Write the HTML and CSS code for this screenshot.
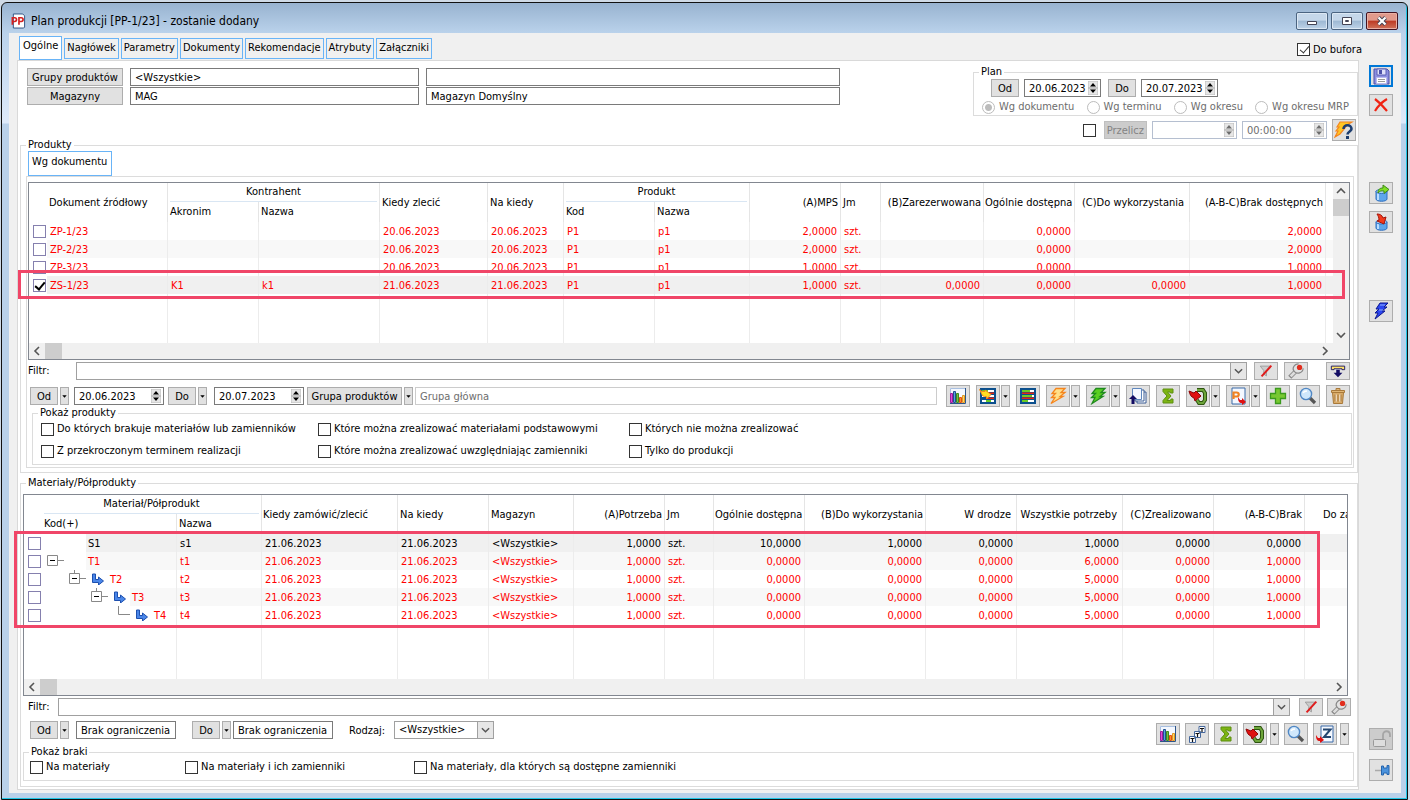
FILE: index.html
```html
<!DOCTYPE html>
<html lang="pl">
<head>
<meta charset="utf-8">
<title>Plan produkcji [PP-1/23]</title>
<link rel="stylesheet" href="styles.css">
</head>
<body>
<svg class="sprite" aria-hidden="true">
  <symbol id="i-save" viewBox="0 0 20 18"><path d="M3 2h13l2 2v13H3z" fill="#8d8fe0" stroke="#4c51a8"/><path d="M6 2h9v6H6z" fill="#dfe0fb" stroke="#5b60b5"/><path d="M8 3h3v4H8z" fill="#4c51a8"/><path d="M5.500 10.500h10v6h-10z" fill="#fff" stroke="#b9bbee"/><path d="M7 12.500h7M7 14.500h7" stroke="#999"/></symbol>
  <symbol id="i-x" viewBox="0 0 20 18"><path d="M4 3c4 3 8 7 12 12M16 3C11 6 7 10 4 15" fill="none" stroke="#f02313" stroke-width="2.200"/></symbol>
  <symbol id="i-dbup" viewBox="0 0 20 18"><path d="M5 7v8c0 3 11 3 11 0V7z" fill="#5ea6ea" stroke="#2f6fc0"/><path d="M7 9v7" stroke="#b9dcff" stroke-width="2"/><ellipse cx="10.500" cy="7.500" rx="5.500" ry="2" fill="#a9d2f8" stroke="#2f6fc0"/><path d="M7 9c0-4 2-5 5-5V1l6 4.500-5 4V7c-3-.5-4 0-6 2z" fill="#7fdd26" stroke="#3c8a14"/></symbol>
  <symbol id="i-dbdown" viewBox="0 0 20 18"><path d="M5 9v6c0 3 11 3 11 0V9z" fill="#5ea6ea" stroke="#2f6fc0"/><path d="M7 11v5" stroke="#b9dcff" stroke-width="2"/><ellipse cx="10.500" cy="9" rx="5.500" ry="2" fill="#a9d2f8" stroke="#2f6fc0"/><path d="M6 1c3 0 5 1 6 4l3-1-2 7-7-3 2-1c0-3-1-4-2-6z" fill="#f23a1c" stroke="#a51408"/></symbol>
  <symbol id="i-boltblue" viewBox="0 0 20 18"><path d="M9 1h8l-4 4h3l-5 4h3L4 17l3-6H4l4-4H5z" fill="#2b46f0" stroke="#0b168f"/><path d="M9 3h5M8 8h4" stroke="#8fb0ff"/></symbol>
  <symbol id="i-boltorange" viewBox="0 0 20 18"><path d="M8 1.500h9l-4 4h4l-5 4h3L3 16.500l4-6H3.500l4-4H4z" fill="#ffe08a" stroke="#f5851d" stroke-width="1.300"/></symbol>
  <symbol id="i-boltgreen" viewBox="0 0 20 18"><path d="M8 1.500h9l-4 4h4l-5 4h3L4 16.500l3-6H3.500l4-4H4z" fill="#5ad022" stroke="#1f8a1d" stroke-width="1.300"/></symbol>
  <symbol id="i-boltq" viewBox="0 0 20 18"><path d="M6 1h12l-5 3-2 3-5 6-5 3 3-6H2l3-4H3z" fill="#ffc524" stroke="#f5851d" stroke-width="1.200"/><path d="M9.500 8c0-5 8-5 8 0 0 2.500-4 2.500-4 5.500" fill="none" stroke="#1d3d6e" stroke-width="2.600"/><path d="M12 15h3v3h-3z" fill="#1d3d6e"/></symbol>
  <symbol id="i-lock" viewBox="0 0 20 18"><path d="M12 10V5c0-5 7-5 7 0v2" fill="none" stroke="#a6a6a6" stroke-width="1.800"/><rect x="2.500" y="9.500" width="12" height="7" rx="1" fill="#ddd" stroke="#999"/></symbol>
  <symbol id="i-pin" viewBox="0 0 20 18"><path d="M4 9.500h8" stroke="#aaa" stroke-width="1.500"/><path d="M10.500 5h2v2h3.500V4.500h2v9h-2V12h-3.500v2h-2z" fill="#4b93dd" stroke="#2465ae"/></symbol>
  <symbol id="i-chart" viewBox="0 0 20 18"><path d="M2 1h16v16H2z" fill="#f4f8ff"/><path d="M2.500 17V1.500H18" fill="none" stroke="#a8bfe0"/><path d="M17.500 1v15.500H2" fill="none" stroke="#2d5488"/><path d="M2.500 6.500h2v9h-2z" fill="#e04bd8" stroke="#9a1f9a"/><path d="M5.500 4.500h2v11h-2z" fill="#5aa2de" stroke="#1f4f91"/><path d="M8.500 6.500h2v9h-2z" fill="#76c043" stroke="#3e8a1f"/><path d="M11.500 10.500h2v5h-2z" fill="#ff8a2b" stroke="#e04f10"/><path d="M14.500 8.500h2v7h-2z" fill="#ffd36a" stroke="#e09a20"/></symbol>
  <symbol id="i-list" viewBox="0 0 20 18"><path d="M2 1h16v16H2z" fill="#0b4f8d"/><path d="M4 3h12v2H4zM4 8h12v2H4zM4 13h12v2H4z" fill="#fff"/><path d="M4 3h8v2H4zM4 8h10v2H4zM4 13h6v2H4z" fill="#6acb25"/><path d="M4 5.500h12V7H4zM4 10.500h12V12H4z" fill="#e22714"/></symbol>
  <symbol id="i-listarrow" viewBox="0 0 20 18"><path d="M2 1h16v16H2z" fill="#0b4f8d"/><path d="M4 3h12v2H4zM4 8h12v2H4zM4 13h12v2H4z" fill="#fff"/><path d="M4 3h6v2H4zM8 13h5v2H8z" fill="#6acb25"/><path d="M9 5.500h7V7H9zM9 10.500h7V12H9z" fill="#e22714"/><path d="M1.500 2.500L4 4.500h3V3l6 4.500-4.500 4.500v-2.500C5.500 10 3.500 8 4 7.500z" fill="#ffdf21" stroke="#f28a1c"/></symbol>
  <symbol id="i-pages" viewBox="0 0 20 18"><path d="M9 5h9v11H9z" fill="#fff" stroke="#3b5d95"/><path d="M7 3h9v11H7z" fill="#fff" stroke="#3b5d95"/><path d="M4.500 1.500h9v11h-9z" fill="#f4f8ff" stroke="#5e86bd"/><path d="M1 12l4-4 4 4H6.500v5h-3v-5z" fill="#120c63"/></symbol>
  <symbol id="i-sigma" viewBox="0 0 20 18"><path d="M5 2h10v4h-2.500L12 5H9.500L13 9l-4 4.500h3.500l.5-1.500H15v4H5v-2.500L9 9 5 4.500z" fill="#7db414" stroke="#5c8f10"/></symbol>
  <symbol id="i-loop" viewBox="0 0 20 18"><path d="M9 3h6l2 3v7l-2 3h-4l-2-3" fill="none" stroke="#2e5410" stroke-width="4"/><path d="M9 3h6l2 3v7l-2 3h-4l-2-3" fill="none" stroke="#6da53a" stroke-width="2"/><path d="M1 4l5 2 2-2 5 5-6 5-1-3C3 10 2 8 1 4z" fill="#df1111" stroke="#8e0606"/></symbol>
  <symbol id="i-p" viewBox="0 0 20 18"><path d="M4 1h13v16H4z" fill="#f4f8ff" stroke="#3b6ba8"/><path d="M5.500 12V5.500h3c3 0 3 4 0 4h-3" fill="none" stroke="#f08222" stroke-width="2.200"/><path d="M10 10l2 3 2 0v-2l4 4-4 3v-2c-3 0-4-2-4-6z" fill="#df1111"/></symbol>
  <symbol id="i-z" viewBox="0 0 20 18"><path d="M6 1h12v16H6z" fill="#f4f8ff" stroke="#3b6ba8"/><path d="M8 4.500h7.500L9 12h7" fill="none" stroke="#24466f" stroke-width="2"/><path d="M1 10l2 3h2v-2l4 4-4 3v-2c-3 0-4-2-4-6z" fill="#df1111"/></symbol>
  <symbol id="i-plus" viewBox="0 0 20 18"><path d="M7.500 1.500h5v5h5v5h-5v5h-5v-5h-5v-5h5z" fill="#78c832" stroke="#3b9a1d" stroke-width="1.300"/></symbol>
  <symbol id="i-zoom" viewBox="0 0 20 18"><path d="M12 11l5 5" stroke="#555" stroke-width="3.200"/><circle cx="8" cy="7" r="5.600" fill="#cfe7fb" stroke="#5087c4" stroke-width="1.400"/><path d="M5 6c1-2 2-2 4-2" fill="none" stroke="#fff" stroke-width="1.500"/></symbol>
  <symbol id="i-trash" viewBox="0 0 20 18"><path d="M4.500 5.500h11l-1 11h-9z" fill="#d9ab68" stroke="#a9793a"/><path d="M3.500 3.500h13v2h-13zM8 3V1.500h4V3" fill="#e0b675" stroke="#a9793a"/><path d="M8 7.500v7M12 7.500v7" stroke="#fff"/><path d="M7 7.500v7M13 7.500v7M10 7.500v7" stroke="#a9793a"/></symbol>
  <symbol id="i-nofilter" viewBox="0 0 20 18"><path d="M3.500 3.500h11l-4 5v6l-3-2v-4z" fill="#ccc" stroke="#999"/><path d="M5 15L16 3" stroke="#e01c1c" stroke-width="2.200"/></symbol>
  <symbol id="i-wrench" viewBox="0 0 20 18"><path d="M3 16l7-7" stroke="#888" stroke-width="5"/><path d="M4 15l6-6" stroke="#ddd" stroke-width="3"/><path d="M13 1C8 1 5 6 8 9.500s10 2 10-3.500" fill="#e2e2e2" stroke="#888" stroke-width="1.300"/><circle cx="14" cy="5" r="3" fill="#e12f1f"/></symbol>
  <symbol id="i-expand" viewBox="0 0 20 18"><path d="M2.500 3.500h15v4h-3v-1h-9v1h-3z" fill="#ffe36a" stroke="#120c63"/><path d="M8 7.500h4V11h3l-5 5-5-5h3z" fill="#120c63"/></symbol>
  <symbol id="i-steps" viewBox="0 0 20 18"><path d="M12 1.500h6v6h-6zM7.500 6.500h6v6h-6zM2.500 11.500h6v6h-6z" fill="#fff" stroke="#44679c"/><path d="M13 3.500h4M15 3v4M8.500 8.500h4M10.500 8v4M3.500 13.500h4M5.500 13v4" stroke="#111" stroke-width="1.200"/></symbol>
  <symbol id="i-sub" viewBox="0 0 13 12"><path d="M1.500 1h3v5.500h3V4l5 4-5 4V9.500h-6z" fill="#4a86e8" stroke="#1d4fae"/></symbol>
  <symbol id="i-chev" viewBox="0 0 10 10"><path d="M1 3l4 4 4-4" fill="none" stroke="#555" stroke-width="1.600"/></symbol>
  <symbol id="i-caret" viewBox="0 0 8 8"><path d="M1.500 3h5L4 6z" fill="#000"/></symbol>
  <symbol id="i-spin" viewBox="0 0 10 14"><path d="M0 0h10v7H0zM0 7h10v7H0z" fill="#e6e6e6" stroke="#bbb"/><path d="M2 5.500h6L5 2zM2 8.500h6L5 12z" fill="currentColor"/></symbol>
</svg>

<div class="window">
  <header class="titlebar">
    <svg class="app-icon" viewBox="0 0 16 16"><path d="M2.500.5h10l2 2v12l-1 1h-11z" fill="#fff" stroke="#2c4f80"/><path d="M1.500 12V4.500H4c2.500 0 2.500 4 0 4H2M8.500 12V4.500H11c2.500 0 2.500 4 0 4H9" fill="none" stroke="#d42222" stroke-width="1.800"/></svg>
    <h1 class="title">Plan produkcji [PP-1/23] - zostanie dodany</h1>
    <button class="win-btn" aria-label="Minimalizuj"><svg viewBox="0 0 30 16"><path d="M10.500 8.500h9v3h-9z" fill="#fff" stroke="#445"/></svg></button>
    <button class="win-btn" aria-label="Maksymalizuj"><svg viewBox="0 0 30 16"><path d="M10.500 4.500h9v7h-9zM13.500 7.500h3v1h-3z" fill="#fff" stroke="#445"/></svg></button>
    <button class="win-btn win-close" aria-label="Zamknij"><svg viewBox="0 0 30 16"><path d="M11.500 4.500l7 7M18.500 4.500l-7 7" stroke="#445" stroke-width="4"/><path d="M11.500 4.500l7 7M18.500 4.500l-7 7" stroke="#fff" stroke-width="2.200"/></svg></button>
  </header>

  <div class="client">
    <nav class="tabs">
      <button class="tab tab-active">Ogólne</button>
      <button class="tab">Nagłówek</button>
      <button class="tab">Parametry</button>
      <button class="tab">Dokumenty</button>
      <button class="tab">Rekomendacje</button>
      <button class="tab">Atrybuty</button>
      <button class="tab">Załączniki</button>
      <label class="check buffer"><input type="checkbox" checked>Do bufora</label>
    </nav>

    <div class="body">
      <main class="panel">
        <div class="top">
          <div class="sources">
            <button class="btn">Grupy produktów</button>
            <input class="text" aria-label="Grupy produktów" value="&lt;Wszystkie&gt;">
            <input class="text" aria-label="Nazwa grupy">
            <button class="btn">Magazyny</button>
            <input class="text" aria-label="Magazyny" value="MAG">
            <input class="text" aria-label="Nazwa magazynu" value="Magazyn Domyślny">
          </div>
          <div class="plan">
            <fieldset class="group plan-group">
              <legend>Plan</legend>
              <div class="plan-dates">
                <button class="btn btn-s">Od</button>
                <span class="spin spin-s"><input aria-label="Plan od" value="20.06.2023"><svg><use href="#i-spin"/></svg></span>
                <button class="btn btn-s">Do</button>
                <span class="spin spin-s"><input aria-label="Plan do" value="20.07.2023"><svg><use href="#i-spin"/></svg></span>
              </div>
              <div class="radios">
                <label class="radio"><input type="radio" name="wg" checked disabled>Wg dokumentu</label>
                <label class="radio"><input type="radio" name="wg" disabled>Wg terminu</label>
                <label class="radio"><input type="radio" name="wg" disabled>Wg okresu</label>
                <label class="radio"><input type="radio" name="wg" disabled>Wg okresu MRP</label>
              </div>
            </fieldset>
            <div class="recalc">
              <input type="checkbox" aria-label="Przelicz">
              <button class="btn btn-off" disabled>Przelicz</button>
              <span class="spin spin-off"><input aria-label="Data przeliczenia" disabled><svg><use href="#i-spin"/></svg></span>
              <span class="spin spin-off"><input aria-label="Godzina przeliczenia" value="00:00:00" disabled><svg><use href="#i-spin"/></svg></span>
              <button class="icon" aria-label="Przelicz plan"><svg><use href="#i-boltq"/></svg></button>
            </div>
          </div>
        </div>

        <fieldset class="group products">
          <legend>Produkty</legend>
          <button class="tab inner-tab">Wg dokumentu</button>
          <div class="tab-panel">
            <div class="grid">
              <div class="grid-row">
                <table class="data">
                  <colgroup><col class="w18"><col class="w121"><col class="w91"><col class="w121"><col class="w108"><col class="w76"><col class="w91"><col class="w95"><col class="w91"><col class="w40"><col class="w103"><col class="w91"><col class="w115"><col class="w136"><col></colgroup>
                  <thead>
                    <tr><th rowspan="2" class="nb"></th><th rowspan="2">Dokument źródłowy</th><th colspan="2" class="span"><div>Kontrahent</div></th><th rowspan="2">Kiedy zlecić</th><th rowspan="2">Na kiedy</th><th colspan="2" class="span"><div>Produkt</div></th><th rowspan="2" class="n">(A)MPS</th><th rowspan="2">Jm</th><th rowspan="2" class="n">(B)Zarezerwowana</th><th rowspan="2" class="tight">Ogólnie dostępna</th><th rowspan="2" class="n wide">(C)Do wykorzystania</th><th rowspan="2" class="n">(A-B-C)Brak dostępnych</th><th rowspan="2" class="nb"></th></tr>
                    <tr><th>Akronim</th><th>Nazwa</th><th>Kod</th><th>Nazwa</th></tr>
                  </thead>
                  <tbody>
                    <tr class="red"><td class="c nb"><input type="checkbox" aria-label="ZP-1/23"></td><td>ZP-1/23</td><td></td><td></td><td>20.06.2023</td><td>20.06.2023</td><td>P1</td><td>p1</td><td class="n">2,0000</td><td>szt.</td><td></td><td class="n">0,0000</td><td></td><td class="n">2,0000</td><td class="nb"></td></tr>
                    <tr class="red alt"><td class="c nb"><input type="checkbox" aria-label="ZP-2/23"></td><td>ZP-2/23</td><td></td><td></td><td>20.06.2023</td><td>20.06.2023</td><td>P1</td><td>p1</td><td class="n">2,0000</td><td>szt.</td><td></td><td class="n">0,0000</td><td></td><td class="n">2,0000</td><td class="nb"></td></tr>
                    <tr class="red"><td class="c nb"><input type="checkbox" aria-label="ZP-3/23"></td><td>ZP-3/23</td><td></td><td></td><td>20.06.2023</td><td>20.06.2023</td><td>P1</td><td>p1</td><td class="n">1,0000</td><td>szt.</td><td></td><td class="n">0,0000</td><td></td><td class="n">1,0000</td><td class="nb"></td></tr>
                    <tr class="red sel"><td class="c nb"><input type="checkbox" aria-label="ZS-1/23" checked></td><td>ZS-1/23</td><td>K1</td><td>k1</td><td>21.06.2023</td><td>21.06.2023</td><td>P1</td><td>p1</td><td class="n">1,0000</td><td>szt.</td><td class="n">0,0000</td><td class="n">0,0000</td><td class="n">0,0000</td><td class="n">1,0000</td><td class="nb"></td></tr>
                    <tr class="rest"><td class="nb"></td><td></td><td></td><td></td><td></td><td></td><td></td><td></td><td></td><td></td><td></td><td></td><td></td><td></td><td class="nb"></td></tr>
                  </tbody>
                </table>
                <div class="vscroll"><svg class="up"><use href="#i-chev"/></svg><i></i><svg class="end"><use href="#i-chev"/></svg></div>
              </div>
              <div class="hscroll hscroll-v"><svg class="left"><use href="#i-chev"/></svg><i></i><svg class="right end"><use href="#i-chev"/></svg></div>
              <div class="mark mark-products"></div>
            </div>

            <div class="filter">
              <label class="filter-label" for="f1">Filtr:</label>
              <span class="combo"><select id="f1"><option></option></select><svg><use href="#i-chev"/></svg></span>
              <button class="icon flat" aria-label="Wyczyść filtr"><svg><use href="#i-nofilter"/></svg></button>
              <button class="icon flat" aria-label="Konstruktor filtra"><svg><use href="#i-wrench"/></svg></button>
              <button class="icon flat push" aria-label="Zwiń"><svg><use href="#i-expand"/></svg></button>
            </div>

            <div class="tools">
              <button class="btn btn-s">Od</button><button class="drop" aria-label="Opcje od"><svg><use href="#i-caret"/></svg></button>
              <span class="spin spin-l"><input aria-label="Data od" value="20.06.2023"><svg><use href="#i-spin"/></svg></span>
              <button class="btn btn-s">Do</button><button class="drop" aria-label="Opcje do"><svg><use href="#i-caret"/></svg></button>
              <span class="spin spin-l spin-next"><input aria-label="Data do" value="20.07.2023"><svg><use href="#i-spin"/></svg></span>
              <button class="btn btn-group">Grupa produktów</button><button class="drop" aria-label="Opcje grupy"><svg><use href="#i-caret"/></svg></button>
              <input class="text pale" aria-label="Grupa produktów" value="Grupa główna">
              <div class="icons">
                <button class="icon" aria-label="Wykres"><svg><use href="#i-chart"/></svg></button>
                <span class="pair"><button class="icon" aria-label="Generuj"><svg><use href="#i-listarrow"/></svg></button><button class="drop" aria-label="Więcej"><svg><use href="#i-caret"/></svg></button></span>
                <button class="icon" aria-label="Harmonogram"><svg><use href="#i-list"/></svg></button>
                <span class="pair"><button class="icon" aria-label="Zlecenia"><svg><use href="#i-boltorange"/></svg></button><button class="drop" aria-label="Więcej"><svg><use href="#i-caret"/></svg></button></span>
                <span class="pair"><button class="icon" aria-label="Realizuj"><svg><use href="#i-boltgreen"/></svg></button><button class="drop" aria-label="Więcej"><svg><use href="#i-caret"/></svg></button></span>
                <button class="icon" aria-label="Dokumenty"><svg><use href="#i-pages"/></svg></button>
                <button class="icon" aria-label="Suma"><svg><use href="#i-sigma"/></svg></button>
                <span class="pair"><button class="icon" aria-label="Pobierz"><svg><use href="#i-loop"/></svg></button><button class="drop" aria-label="Więcej"><svg><use href="#i-caret"/></svg></button></span>
                <span class="pair"><button class="icon" aria-label="Produkcja"><svg><use href="#i-p"/></svg></button><button class="drop" aria-label="Więcej"><svg><use href="#i-caret"/></svg></button></span>
                <button class="icon" aria-label="Dodaj"><svg><use href="#i-plus"/></svg></button>
                <button class="icon" aria-label="Podgląd"><svg><use href="#i-zoom"/></svg></button>
                <button class="icon" aria-label="Usuń"><svg><use href="#i-trash"/></svg></button>
              </div>
            </div>

            <fieldset class="group show-products">
              <legend>Pokaż produkty</legend>
              <div class="checks">
                <label class="check"><input type="checkbox">Do których brakuje materiałów lub zamienników</label>
                <label class="check"><input type="checkbox">Które można zrealizować materiałami podstawowymi</label>
                <label class="check"><input type="checkbox">Których nie można zrealizować</label>
                <label class="check"><input type="checkbox">Z przekroczonym terminem realizacji</label>
                <label class="check"><input type="checkbox">Które można zrealizować uwzględniając zamienniki</label>
                <label class="check"><input type="checkbox">Tylko do produkcji</label>
              </div>
            </fieldset>
          </div>
        </fieldset>

        <fieldset class="group materials">
          <legend>Materiały/Półprodukty</legend>
          <div class="grid">
            <table class="data">
              <colgroup><col class="w18"><col class="w135"><col class="w85"><col class="w136"><col class="w91"><col class="w85"><col class="w91"><col class="w49"><col class="w91"><col class="w121"><col class="w91"><col class="w106"><col class="w91"><col class="w91"><col></colgroup>
              <thead>
                <tr><th rowspan="2" class="nb"></th><th colspan="2" class="span"><div>Materiał/Półprodukt</div></th><th rowspan="2" class="tight">Kiedy zamówić/zlecić</th><th rowspan="2">Na kiedy</th><th rowspan="2">Magazyn</th><th rowspan="2" class="n">(A)Potrzeba</th><th rowspan="2">Jm</th><th rowspan="2" class="tight">Ogólnie dostępna</th><th rowspan="2" class="n">(B)Do wykorzystania</th><th rowspan="2" class="n wide">W drodze</th><th rowspan="2" class="n wide">Wszystkie potrzeby</th><th rowspan="2" class="n">(C)Zrealizowano</th><th rowspan="2" class="n">(A-B-C)Brak</th><th rowspan="2" class="nb last">Do za</th></tr>
                <tr><th>Kod(+)</th><th>Nazwa</th></tr>
              </thead>
              <tbody>
                <tr class="sel"><td class="c nb"><input type="checkbox" aria-label="S1"></td><td class="tree"><div class="node"><span class="gap l0"></span><span class="code">S1</span></div></td><td>s1</td><td>21.06.2023</td><td>21.06.2023</td><td>&lt;Wszystkie&gt;</td><td class="n">1,0000</td><td>szt.</td><td class="n">10,0000</td><td class="n">1,0000</td><td class="n">0,0000</td><td class="n">1,0000</td><td class="n">0,0000</td><td class="n">0,0000</td><td class="nb"></td></tr>
                <tr class="red alt"><td class="c nb"><input type="checkbox" aria-label="T1"></td><td class="tree"><div class="node"><span class="gap l1"></span><svg class="box" viewBox="0 0 18 18"><path d="M1.500 3.500h10v10h-10zM12 8.500h6" fill="none" stroke="#888"/><path d="M4 8.500h5" stroke="#000"/></svg><span class="gap join"></span><span class="code">T1</span></div></td><td>t1</td><td>21.06.2023</td><td>21.06.2023</td><td>&lt;Wszystkie&gt;</td><td class="n">1,0000</td><td>szt.</td><td class="n">0,0000</td><td class="n">0,0000</td><td class="n">0,0000</td><td class="n">6,0000</td><td class="n">0,0000</td><td class="n">1,0000</td><td class="nb"></td></tr>
                <tr class="red"><td class="c nb"><input type="checkbox" aria-label="T2"></td><td class="tree"><div class="node"><span class="gap l2"></span><svg class="box" viewBox="0 0 18 18"><path d="M1.500 3.500h10v10h-10zM12 8.500h6M6.500 0v3" fill="none" stroke="#888"/><path d="M4 8.500h5" stroke="#000"/></svg><svg class="sub"><use href="#i-sub"/></svg><span class="code">T2</span></div></td><td>t2</td><td>21.06.2023</td><td>21.06.2023</td><td>&lt;Wszystkie&gt;</td><td class="n">1,0000</td><td>szt.</td><td class="n">0,0000</td><td class="n">0,0000</td><td class="n">0,0000</td><td class="n">5,0000</td><td class="n">0,0000</td><td class="n">1,0000</td><td class="nb"></td></tr>
                <tr class="red alt"><td class="c nb"><input type="checkbox" aria-label="T3"></td><td class="tree"><div class="node"><span class="gap l3"></span><svg class="box" viewBox="0 0 18 18"><path d="M1.500 3.500h10v10h-10zM12 8.500h6M6.500 0v3" fill="none" stroke="#888"/><path d="M4 8.500h5" stroke="#000"/></svg><svg class="sub"><use href="#i-sub"/></svg><span class="code">T3</span></div></td><td>t3</td><td>21.06.2023</td><td>21.06.2023</td><td>&lt;Wszystkie&gt;</td><td class="n">1,0000</td><td>szt.</td><td class="n">0,0000</td><td class="n">0,0000</td><td class="n">0,0000</td><td class="n">5,0000</td><td class="n">0,0000</td><td class="n">1,0000</td><td class="nb"></td></tr>
                <tr class="red"><td class="c nb"><input type="checkbox" aria-label="T4"></td><td class="tree"><div class="node"><span class="gap l4"></span><svg class="box" viewBox="0 0 18 18"><path d="M6.500 0v8.500H18" fill="none" stroke="#888"/></svg><svg class="sub"><use href="#i-sub"/></svg><span class="code">T4</span></div></td><td>t4</td><td>21.06.2023</td><td>21.06.2023</td><td>&lt;Wszystkie&gt;</td><td class="n">1,0000</td><td>szt.</td><td class="n">0,0000</td><td class="n">0,0000</td><td class="n">0,0000</td><td class="n">5,0000</td><td class="n">0,0000</td><td class="n">1,0000</td><td class="nb"></td></tr>
                <tr class="rest"><td class="nb"></td><td></td><td></td><td></td><td></td><td></td><td></td><td></td><td></td><td></td><td></td><td></td><td></td><td></td><td class="nb"></td></tr>
              </tbody>
            </table>
            <div class="hscroll"><svg class="left"><use href="#i-chev"/></svg><i></i><svg class="right end"><use href="#i-chev"/></svg></div>
            <div class="mark mark-materials"></div>
          </div>

          <div class="filter">
            <label class="filter-label" for="f2">Filtr:</label>
            <span class="combo"><select id="f2"><option></option></select><svg><use href="#i-chev"/></svg></span>
            <button class="icon flat" aria-label="Wyczyść filtr"><svg><use href="#i-nofilter"/></svg></button>
            <button class="icon flat" aria-label="Konstruktor filtra"><svg><use href="#i-wrench"/></svg></button>
          </div>

          <div class="limits">
            <button class="btn btn-s">Od</button><button class="drop" aria-label="Opcje od"><svg><use href="#i-caret"/></svg></button>
            <input class="text limit limit-from" aria-label="Od" value="Brak ograniczenia">
            <button class="btn btn-s">Do</button><button class="drop" aria-label="Opcje do"><svg><use href="#i-caret"/></svg></button>
            <input class="text limit" aria-label="Do" value="Brak ograniczenia">
            <label class="kind-label" for="kind">Rodzaj:</label>
            <span class="combo kind"><select id="kind"><option>&lt;Wszystkie&gt;</option></select><svg><use href="#i-chev"/></svg></span>
            <div class="icons">
              <button class="icon" aria-label="Wykres"><svg><use href="#i-chart"/></svg></button>
              <button class="icon" aria-label="Struktura"><svg><use href="#i-steps"/></svg></button>
              <button class="icon" aria-label="Suma"><svg><use href="#i-sigma"/></svg></button>
              <span class="pair"><button class="icon" aria-label="Pobierz"><svg><use href="#i-loop"/></svg></button><button class="drop" aria-label="Więcej"><svg><use href="#i-caret"/></svg></button></span>
              <button class="icon" aria-label="Podgląd"><svg><use href="#i-zoom"/></svg></button>
              <span class="pair"><button class="icon" aria-label="Zamówienia"><svg><use href="#i-z"/></svg></button><button class="drop" aria-label="Więcej"><svg><use href="#i-caret"/></svg></button></span>
            </div>
          </div>

          <fieldset class="group show-missing">
            <legend>Pokaż braki</legend>
            <div class="checks">
              <label class="check"><input type="checkbox">Na materiały</label>
              <label class="check"><input type="checkbox">Na materiały i ich zamienniki</label>
              <label class="check"><input type="checkbox">Na materiały, dla których są dostępne zamienniki</label>
            </div>
          </fieldset>
        </fieldset>
      </main>

      <aside class="side">
        <button class="icon side-save" aria-label="Zapisz"><svg><use href="#i-save"/></svg></button>
        <button class="icon" aria-label="Anuluj"><svg><use href="#i-x"/></svg></button>
        <button class="icon side-export" aria-label="Eksport"><svg><use href="#i-dbup"/></svg></button>
        <button class="icon" aria-label="Import"><svg><use href="#i-dbdown"/></svg></button>
        <button class="icon side-run" aria-label="Uruchom"><svg><use href="#i-boltblue"/></svg></button>
        <button class="icon icon-off side-lock" aria-label="Blokada" disabled><svg><use href="#i-lock"/></svg></button>
        <button class="icon side-pin" aria-label="Przypnij"><svg><use href="#i-pin"/></svg></button>
      </aside>
    </div>
  </div>
</div>
</body>
</html>
```
FILE: styles.css
```css
* { box-sizing: border-box; }
body {
  margin: 0;
  background: #cfdae6;
  font: 11px/14px "DejaVu Sans Condensed", "Noto Sans", sans-serif;
  color: #000;
}
button, input, select { font: inherit; color: inherit; margin: 0; }
.sprite { position: absolute; width: 0; height: 0; }

/* Window frame */
.window {
  min-height: calc(100vh - 2px);
  margin: 2px 2px 0 1px;
  padding: 0 6px 6px 7px;
  display: flex;
  flex-direction: column;
  border: 1px solid #111;
  border-radius: 6px 6px 0 0;
  background: linear-gradient(#98b3d0 0, #bad2eb 30px, #deeafa 120px, #b9d1ea 121px);
  box-shadow: inset -1px -1px #1fc6e6;
}
.titlebar { display: flex; align-items: center; height: 30px; gap: 3px; padding: 6px 3px 0 2px; }
.app-icon { width: 15px; height: 16px; margin-right: 2px; }
.title { flex: 1; margin: 0; font-size: 12px; line-height: 16px; font-weight: normal; }
.win-btn {
  width: 32px; height: 18px; padding: 0;
  border: 1px solid #4b6481; border-radius: 2px;
  background: linear-gradient(#c5d7ea 45%, #9db8d3 50%, #bed3e8);
  box-shadow: inset 0 0 0 1px #dce8f4;
}
.win-btn svg { display: block; width: 30px; height: 16px; }
.win-close { border-color: #431422; background: linear-gradient(#e19a8c 45%, #bd3a24 50%, #d0735a); box-shadow: inset 0 0 0 1px #e9b0a4; }

.client { flex: 1; display: flex; flex-direction: column; background: #f0f0f0; }
.tabs { display: flex; align-items: center; gap: 2px; height: 27px; padding: 3px 39px 0 10px; }
.tab { height: 21px; padding: 0 2px; border: 1px solid #69b4f7; background: #f0f0f0; white-space: nowrap; }
.tab-active { height: 24px; padding: 0 3px 4px; background: #fff; }
.buffer { margin-left: auto; padding-top: 3px; }

.body { flex: 1; display: flex; padding: 0 8px 3px; gap: 10px; }
.panel { flex: 1; min-width: 0; border: 1px solid #d9d9d9; background: #fff; padding-bottom: 2px; }
.side { width: 24px; display: flex; flex-direction: column; gap: 7px; padding: 5px 0 9px; }
.side-export { margin-top: 59px; }
.side-run { margin-top: 60px; }
.side-lock { margin-top: auto; }
.side-pin { margin-top: 2px; }

/* Controls */
.btn { height: 18px; padding: 0 4px; border: 1px solid #adadad; background: #e1e1e1; line-height: 15px; white-space: nowrap; }
.btn-s { width: 28px; padding: 0; }
.btn-off { background: #ccc; border-color: #bfbfbf; color: #838383; padding: 0 2px; }
.text { height: 18px; padding: 0 4px; border: 1px solid #7a7a7a; background: #fff; min-width: 0; }
.text.pale { border-color: #ccc; color: #6d6d6d; }
.icon { flex: none; width: 24px; height: 22px; padding: 1px; border: 1px solid #adadad; background: #e1e1e1; }
.icon svg { display: block; width: 20px; height: 18px; margin: auto; }
.icon.flat { height: 18px; padding: 0; }
.icon.flat svg { height: 16px; }
.icon-off { background: #ccc; }
.side-save { border: 2px solid #0078d7; padding: 0; }
.drop { flex: none; width: 9px; height: 18px; padding: 0; border: 1px solid #adadad; background: #e1e1e1; }
.drop svg { display: block; width: 7px; height: 8px; }
.spin { display: flex; align-items: center; height: 18px; padding: 0 2px 0 4px; border: 1px solid #7a7a7a; background: #fff; }
.spin input { flex: 1; min-width: 0; height: 16px; padding: 0; border: 0; background: none; }
.spin svg { flex: none; width: 10px; height: 14px; }
.spin-s { width: 77px; }
.spin-l { width: 90px; }
.spin-off { width: 85px; border-color: #b5bfd0; color: #6d6d6d; }
.combo { flex: 1; display: flex; height: 18px; border: 1px solid #a0a0a0; position: relative; }
.combo select { flex: 1; min-width: 0; appearance: none; border: 0; border-radius: 0; padding: 0 4px; background: #fff; }
.combo svg { position: absolute; right: 0; top: 0; width: 16px; height: 16px; padding: 3px; background: #e6e6e6; border-left: 1px solid #a0a0a0; pointer-events: none; }
input[type="checkbox"] { appearance: none; flex: none; width: 13px; height: 13px; border: 1px solid #333; background: #fff; position: relative; display: block; }
input[type="checkbox"]:checked::before { content: ""; position: absolute; left: 4px; top: 0; width: 4px; height: 8px; border: solid #333; border-width: 0 1px 1px 0; transform: rotate(40deg); }
.check { display: flex; align-items: center; gap: 3px; white-space: nowrap; }
.radio { display: flex; align-items: center; gap: 4px; color: #6d6d6d; white-space: nowrap; }
.radio input { appearance: none; width: 13px; height: 13px; margin: 0; border: 1px solid #bcbcbc; border-radius: 50%; background: #fff; }
.radio input:checked { background: radial-gradient(#bcbcbc 0 3px, #fff 4px); }
.group { min-width: 0; margin: 0; border: 1px solid #dcdcdc; padding: 0; }
.group legend { margin-left: 5px; padding: 0 2px; line-height: 12px; }

/* Plan settings */
.top { display: flex; justify-content: space-between; align-items: flex-start; padding-top: 5px; }
.sources { display: grid; grid-template-columns: 96px 289px 414px; column-gap: 7px; row-gap: 1px; padding: 2px 0 0 9px; }
.plan { display: flex; flex-direction: column; width: 385px; }
.plan-group { height: 50px; padding: 1px 8px 0; }
.plan-group legend { margin-left: -3px; }
.plan-dates { display: flex; gap: 5px; padding-left: 9px; }
.plan-dates .spin-s { margin-right: 2px; }
.radios { display: flex; justify-content: space-between; padding-top: 3px; }
.recalc { display: flex; align-items: center; justify-content: flex-end; gap: 5px; height: 22px; margin: 3px 2px 1px 0; }
.recalc .btn { margin-left: 3px; }

/* Data grids */
.w18 { width: 18px; }
.w40 { width: 40px; }
.w49 { width: 49px; }
.w76 { width: 76px; }
.w85 { width: 85px; }
.w91 { width: 91px; }
.w95 { width: 95px; }
.w103 { width: 103px; }
.w106 { width: 106px; }
.w108 { width: 108px; }
.w115 { width: 115px; }
.w121 { width: 121px; }
.w135 { width: 135px; }
.w136 { width: 136px; }
.grid { position: relative; border: 1px solid #828790; }
.grid-row { display: flex; }
.data { flex: 1; width: 100%; table-layout: fixed; border-collapse: separate; border-spacing: 0; }
.data th { font-weight: normal; text-align: left; height: 20px; padding: 0 2px; border-right: 1px solid #e5e5e5; white-space: nowrap; line-height: 14px; }
.data th.span { height: 19px; padding: 0 2px; text-align: center; }
.data th.span div { height: 19px; line-height: 18px; border-bottom: 1px solid #d9e6f3; }
.data td { height: 18px; padding: 1px 3px 0; border-right: 1px solid #ececec; white-space: nowrap; line-height: 14px; }
.data .n { text-align: right; }
.data th.wide { padding-right: 5px; }
.data th.tight { padding: 0 1px; }
.data th.last { padding-left: 18px; padding-right: 0; overflow: hidden; }
.data .nb { border-right: 0; }
.data td.c { padding: 0 0 0 4px; }
.data td.c input { border-color: #8580ae; }
.data td.c input:checked::before { border-color: #000; border-width: 0 2px 2px 0; left: 3px; }
.alt td { background: #f8f8f8; }
.sel td { background: #f0f0f0; }
.alt td.c, .sel td.c { background: #fff; }
.red { color: #f00; }
.vscroll { width: 16px; display: flex; flex-direction: column; align-items: center; background: #f0f0f0; }
.vscroll svg { width: 10px; height: 10px; margin: 3px 0; }
.vscroll i { width: 16px; height: 17px; background: #cdcdcd; }
.hscroll { display: flex; align-items: center; height: 16px; background: #f0f0f0; }
.hscroll svg { width: 10px; height: 10px; margin: 0 3px; }
.hscroll i { width: 17px; height: 16px; background: #cdcdcd; }
.hscroll-v { padding-right: 16px; }
.up { transform: rotate(180deg); }
.left { transform: rotate(90deg); }
.right { transform: rotate(-90deg); }
.hscroll .end { margin-left: auto; }
.vscroll .end { margin-top: auto; }
.mark { position: absolute; border: 3px solid #f04668; pointer-events: none; }
.mark-products { left: -11px; right: 4px; top: 87px; height: 29px; }
.mark-materials { left: -10px; right: 27px; top: 36px; height: 97px; }

/* Document tree */
.data td.tree { padding: 0; background: #fff; }
.node { display: flex; align-items: center; height: 18px; }
.gap { flex: none; height: 18px; }
.l0 { width: 44px; }
.l1 { width: 4px; }
.l2 { width: 26px; }
.l3 { width: 48px; }
.l4 { width: 70px; }
.join { width: 22px; }
.box { flex: none; width: 18px; height: 18px; }
.sub { flex: none; width: 13px; height: 12px; margin: 0 4px 0 5px; }
.code { flex: 1; height: 18px; line-height: 19px; padding-left: 2px; }
.alt .code { background: #f8f8f8; }
.sel .code { background: #f0f0f0; }

/* Products */
.products { margin: -3px 0 0 2px; padding: 0 3px 4px 5px; }
.products > legend { margin-left: 0; }
.inner-tab { display: block; height: 25px; margin-left: 2px; padding: 0 4px 4px 3px; background: #fff; }
.tab-panel { border: 1px solid #dcdcdc; padding: 5px 3px 2px 1px; }
.products .rest td { height: 49px; }
.filter { display: flex; align-items: center; gap: 6px; padding-top: 2px; }
.filter-label { width: 42px; }
.filter .push { margin-left: 12px; }
.products .combo { margin-right: 1px; }
.tools { display: flex; align-items: center; padding: 5px 0 0 2px; }
.tools .drop, .limits .drop { margin-left: 2px; }
.spin-l { margin: 0 4px 0 5px; }
.spin-next { margin: 0 3px 0 7px; }
.btn-group { width: 95px; padding: 0; }
.text.pale { flex: 1; margin: 0 9px 0 2px; }
.icons { display: flex; gap: 6px; }
.pair { display: flex; }
.icons .drop { height: 22px; }
.tools .icons .drop { margin-left: 1px; }
.show-products { margin: 0 -2px 0 4px; padding: 3px 8px 6px; }
.show-products legend { margin-left: -3px; }
.show-products .checks { display: grid; grid-template-columns: 277px 311px 1fr; row-gap: 8px; }
.checks .check { height: 14px; }

/* Materials */
.materials { margin: 4px 0 0 2px; padding: 5px 4px 5px 2px; }
.materials > legend { margin-left: 3px; }
.materials .grid { margin-right: 5px; }
.materials .rest td { height: 55px; }
.materials .filter { padding: 2px 2px 0 5px; gap: 4px; }
.materials .filter-label { width: 26px; }
.materials .filter .combo { margin-right: 5px; }
.limits { display: flex; align-items: flex-start; padding: 5px 4px 0 7px; height: 30px; }
.limit { width: 100px; margin-left: 2px; }
.limit-from { margin: 0 16px 0 7px; }
.kind-label { width: 45px; margin: 3px 0 0 16px; }
.kind { flex: none; width: 100px; }
.limits .icons { margin: 2px 0 0 auto; gap: 5px; }
.limits .icons .drop { margin-left: 3px; }
.show-missing { margin-right: -1px; padding: 2px 6px 6px; }
.show-missing legend { margin-left: -1px; }
.show-missing .checks { display: grid; grid-template-columns: 155px 229px 1fr; }
```
